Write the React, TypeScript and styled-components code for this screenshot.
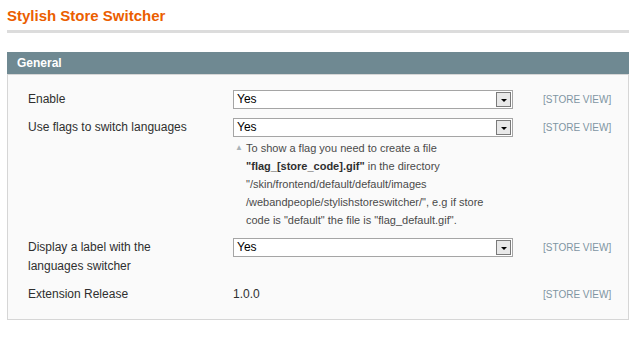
import styled, { createGlobalStyle } from "styled-components";

const GlobalStyle = createGlobalStyle`
  html, body {
    margin: 0;
    padding: 0;
    background: #ffffff;
    font-family: "Liberation Sans", Arial, sans-serif;
  }
`;

type Row = {
  label: string[];
  value?: string;
  text?: string;
  note?: boolean;
};

const rows: Row[] = [
  { label: ["Enable"], value: "Yes" },
  { label: ["Use flags to switch languages"], value: "Yes", note: true },
  { label: ["Display a label with the", "languages switcher"], value: "Yes" },
  { label: ["Extension Release"], text: "1.0.0" },
];

const App = () => {
  return (
    <Page>
      <GlobalStyle />
      <Title>Stylish Store Switcher</Title>
      <TitleRule />
      <Section>
        <SectionHead>General</SectionHead>
        <Panel>
          {rows.map((row) => (
            <FieldRow key={row.label[0]}>
              <Label>
                {row.label.map((line) => (
                  <div key={line}>{line}</div>
                ))}
              </Label>
              <Value>
                {row.value && (
                  <Select>
                    <span>{row.value}</span>
                    <DropButton>
                      <Arrow />
                    </DropButton>
                  </Select>
                )}
                {row.text && <Plain>{row.text}</Plain>}
                {row.note && (
                  <Note>
                    <NoteMark>▲</NoteMark>
                    To show a flag you need to create a file
                    <br />
                    <b>"flag_[store_code].gif"</b> in the directory
                    <br />
                    "/skin/frontend/default/default/images
                    <br />
                    /webandpeople/stylishstoreswitcher/", e.g if store
                    <br />
                    code is "default" the file is "flag_default.gif".
                  </Note>
                )}
              </Value>
              <Scope>[STORE VIEW]</Scope>
            </FieldRow>
          ))}
        </Panel>
      </Section>
    </Page>
  );
};

export default App;

const Page = styled.div`
  width: 629px;
  height: 337px;
  padding-left: 7px;
  box-sizing: border-box;
  overflow: hidden;
`;

const Title = styled.h1`
  margin: 0;
  padding-top: 6px;
  font-size: 15px;
  line-height: 20px;
  font-weight: bold;
  color: #eb5e00;
`;

const TitleRule = styled.div`
  height: 3px;
  margin-top: 4px;
  background: #dcdcdc;
`;

const Section = styled.div`
  margin-top: 19px;
`;

const SectionHead = styled.div`
  height: 22px;
  line-height: 22px;
  padding-left: 10px;
  background: #6f8992;
  color: #ffffff;
  font-size: 12px;
  font-weight: bold;
`;

const Panel = styled.div`
  background: #fafafa;
  border: 1px solid #d6d6d6;
  padding: 11px 0 10px 20px;
`;

const FieldRow = styled.div`
  display: grid;
  grid-template-columns: 205px 280px 1fr;
  padding: 4px 0 5px;
  font-size: 12px;
  line-height: 19px;
  color: #2f2f2f;
  align-items: start;
`;

const Label = styled.div``;

const Value = styled.div``;

const Select = styled.div`
  height: 19px;
  box-sizing: border-box;
  border: 1px solid #a5a5a5;
  background: #ffffff;
  display: flex;
  align-items: center;
  justify-content: space-between;
  padding: 0 1px 0 3px;
  color: #000000;
  font-size: 12px;
`;

const DropButton = styled.span`
  width: 15px;
  height: 15px;
  box-sizing: border-box;
  border: 1px solid #7a7a7a;
  background: #e8e8e8;
  display: flex;
  align-items: center;
  justify-content: center;
`;

const Arrow = styled.span`
  width: 0;
  height: 0;
  border-left: 3px solid transparent;
  border-right: 3px solid transparent;
  border-top: 3px solid #000000;
  margin-top: 1px;
`;

const Plain = styled.div`
  color: #2f2f2f;
`;

const Note = styled.div`
  margin-top: 2px;
  padding-left: 13px;
  position: relative;
  font-size: 11px;
  line-height: 18px;
  color: #4a4a4a;
  b {
    color: #2f2f2f;
  }
`;

const NoteMark = styled.span`
  position: absolute;
  left: 2px;
  top: 0;
  font-size: 8px;
  color: #a8b2b7;
`;

const Scope = styled.div`
  padding-left: 30px;
  white-space: nowrap;
  font-size: 10px;
  color: #7f95a3;
`;
